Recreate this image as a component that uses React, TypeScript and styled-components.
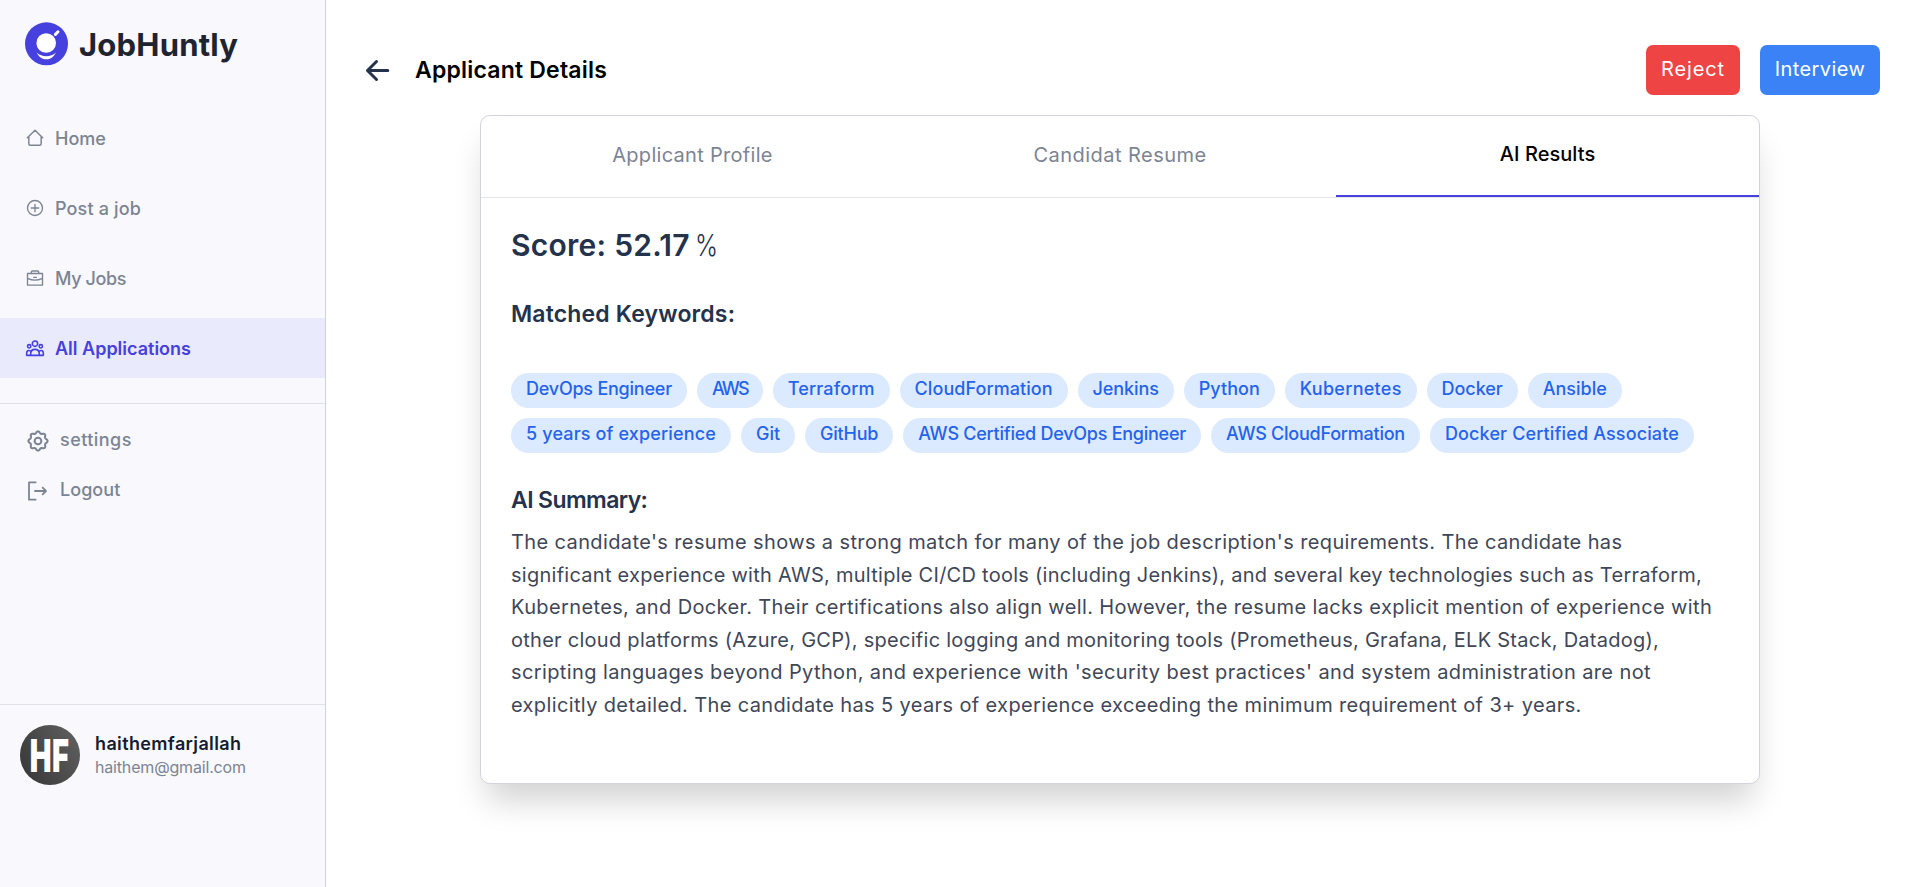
import React from 'react';
import styled, { createGlobalStyle, css } from 'styled-components';

const GlobalStyle = createGlobalStyle`
  *, *::before, *::after { box-sizing: border-box; }
  body {
    margin: 0;
    background: #fff;
    font-family: Inter, "Liberation Sans", sans-serif;
    color: #25324b;
  }
  h1, h2, h3, p { margin: 0; }
  button { font: inherit; border: 0; background: none; padding: 0; }
  svg { display: block; flex: none; }
`;

const Text = styled.span<{ $ls?: number }>`
  letter-spacing: ${(p) => p.$ls ?? 0}px;
  white-space: nowrap;
`;

const Page = styled.div`
  display: flex;
  height: 887px;
  overflow: hidden;
`;

const Sidebar = styled.aside`
  display: flex;
  flex-direction: column;
  flex: none;
  width: 326px;
  background: #f8f8fd;
  border-right: 1px solid #d0d2da;
`;

const Brand = styled.div`
  display: flex;
  align-items: center;
  gap: 10px;
  height: 88px;
  padding-left: 25px;
`;

const BrandName = styled(Text)`
  font-size: 31px;
  font-weight: 700;
  line-height: 36px;
  color: #202430;
  padding-top: 2px;
`;

const Nav = styled.nav`
  display: flex;
  flex-direction: column;
  gap: 10px;
  padding: 20px 0 25px;
`;

const NavItem = styled.a<{ $active?: boolean }>`
  display: flex;
  align-items: center;
  gap: 10px;
  height: 60px;
  padding-left: 25px;
  font-size: 18px;
  font-weight: 500;
  color: #7c8493;
  ${(p) =>
    p.$active &&
    css`
      background: #e9ebfd;
      color: #4640de;
      font-weight: 600;
    `}
`;

const Secondary = styled.div`
  display: flex;
  flex: none;
  flex-direction: column;
  height: 301px;
  padding-top: 12px;
  border-top: 1px solid #e0e1e8;
`;

const SecondaryItem = styled.a`
  display: flex;
  align-items: center;
  gap: 11px;
  height: 50px;
  padding: 0 0 3px 27px;
  font-size: 18px;
  font-weight: 500;
  color: #7c8493;
  & > svg { margin-top: 3px; }
`;

const Account = styled.div`
  display: flex;
  flex: 1;
  gap: 15px;
  padding: 20px;
  border-top: 1px solid #e0e1e8;
`;

const Avatar = styled.div`
  display: flex;
  align-items: center;
  justify-content: center;
  width: 60px;
  height: 60px;
  border-radius: 50%;
  background: linear-gradient(60deg, #353535, #626262);
  color: #fff;
  overflow: hidden;
`;

const Initials = styled.span`
  font-size: 46px;
  font-weight: 900;
  line-height: 60px;
  letter-spacing: 1px;
  transform: scaleX(0.63);
`;

const AccountInfo = styled.div`
  display: flex;
  flex-direction: column;
  padding-top: 7px;
  line-height: 23px;
`;

const AccountName = styled(Text)`
  font-size: 18px;
  font-weight: 600;
  color: #141c2e;
`;

const AccountMail = styled(Text)`
  font-size: 16px;
  line-height: 24px;
  color: #7c8493;
`;

const Main = styled.main`
  display: flex;
  flex: 1;
  flex-direction: column;
  padding: 45px 38px 0 34px;
`;

const Header = styled.header`
  display: flex;
  align-items: center;
  height: 50px;
`;

const BackButton = styled.button`
  margin: 1px 24px 0 5px;
`;

const Title = styled.h1`
  flex: 1;
  padding-bottom: 1px;
  font-size: 23px;
  font-weight: 600;
  color: #000;
`;

const Actions = styled.div`
  display: flex;
  gap: 20px;
`;

const ActionButton = styled.button<{ $tone: 'danger' | 'primary' }>`
  width: ${(p) => (p.$tone === 'danger' ? 94 : 120)}px;
  height: 50px;
  padding-bottom: 3px;
  border-radius: 7px;
  background: ${(p) => (p.$tone === 'danger' ? '#ef4444' : '#3b82f6')};
  color: #fff;
  font-size: 20px;
`;

const Card = styled.section`
  display: flex;
  flex-direction: column;
  align-self: center;
  width: 1280px;
  height: 669px;
  margin-top: 20px;
  border: 1px solid #d1d3dc;
  border-radius: 10px;
  background: #fff;
  box-shadow: 0 23px 33px -7px rgba(0, 0, 0, 0.18);
`;

const Tabs = styled.div`
  display: flex;
  flex: none;
  justify-content: space-between;
  height: 82px;
  border-bottom: 1px solid #e2e4e9;
`;

const Tab = styled.button<{ $active?: boolean }>`
  width: 423px;
  height: 81px;
  padding-bottom: 3px;
  font-size: 20px;
  color: #7c8493;
  ${(p) =>
    p.$active &&
    css`
      border-bottom: 2px solid #4640de;
      color: #000;
      font-weight: 500;
    `}
`;

const Results = styled.div`
  display: flex;
  flex-direction: column;
  padding: 30px 30px 0;
`;

const Score = styled.h2`
  display: flex;
  height: 34px;
  font-size: 30px;
  font-weight: 600;
  line-height: 34px;
`;

const Percent = styled.span`
  margin-left: 5px;
  font-weight: 300;
  transform: scaleX(0.82);
  transform-origin: left;
`;

const SectionTitle = styled.h3<{ $top: number }>`
  margin-top: ${(p) => p.$top}px;
  font-size: 23px;
  font-weight: 600;
  line-height: 28px;
`;

const Chips = styled.div`
  display: flex;
  flex-direction: column;
  gap: 10px;
  margin-top: 45px;
`;

const ChipRow = styled.div`
  display: flex;
  gap: 10px;
`;

const Chip = styled(Text)`
  height: 35px;
  padding: 0 15px;
  border-radius: 18px;
  background: #dbeafe;
  color: #2563eb;
  font-size: 18px;
  font-weight: 500;
  line-height: 32px;
`;

const Summary = styled.p`
  display: flex;
  flex-direction: column;
  margin-top: 12px;
  font-size: 20px;
  line-height: 32.5px;
  color: #3f4757;
`;

const LogoMark = () => (
  <svg width="44" height="44" viewBox="0 0 44 44">
    <circle cx="21.5" cy="21.8" r="21.5" fill="#4640de" />
    <circle cx="21.2" cy="21" r="9.8" fill="#fff" />
    <path d="M33 9.800 30.400 12.400" stroke="#fff" strokeWidth="3" strokeLinecap="round" />
    <path d="M11.6 30.4C16 39.6 26.6 39.6 31 30.4 25.5 35.4 17.1 35.4 11.6 30.4Z" fill="#fff" />
  </svg>
);

const LineIcon = ({ size = 20, weight = 4.4, children }: { size?: number; weight?: number; children: React.ReactNode }) => (
  <svg
    width={size}
    height={size}
    viewBox={`0 0 ${size * 3} ${size * 3}`}
    fill="none"
    stroke="currentColor"
    strokeWidth={weight}
    strokeLinecap="round"
    strokeLinejoin="round"
  >
    {children}
  </svg>
);

const HomeIcon = () => (
  <LineIcon>
    <path d="M7 29 30 7 53 29M11.500 26V47Q11.500 51.500 16 51.500H44Q48.500 51.500 48.500 47V26" />
  </LineIcon>
);

const AddIcon = () => (
  <LineIcon weight={4}>
    <circle cx="30" cy="30" r="22.500" />
    <path d="M30 19V41M19 30H41" />
  </LineIcon>
);

const BriefcaseIcon = () => (
  <LineIcon weight={4}>
    <path d="M7.500 16.500H52.500V51.500H7.500ZM19 16V12Q19 9 22 9H38Q41 9 41 12V16M8 31Q30 42 52 31M26 28H34" />
  </LineIcon>
);

const PeopleIcon = () => (
  <LineIcon weight={4.8}>
    <circle cx="30" cy="17" r="8" />
    <circle cx="12.500" cy="25" r="5" />
    <circle cx="47.500" cy="25" r="5" />
    <path d="M17 52V48C17 39 22 34 30 34S43 39 43 48V52M17 39Q5 34 5 46V52H55V46Q55 34 43 39" />
  </LineIcon>
);

const gearPath = Array.from({ length: 96 }, (_, i) => {
  const a = (i / 96) * Math.PI * 2;
  const r = 26 + 2.8 * Math.cos(8 * a);
  return `${i ? 'L' : 'M'}${(33 + r * Math.sin(a)).toFixed(2)} ${(33 - r * Math.cos(a)).toFixed(2)}`;
}).join('') + 'Z';

const GearIcon = () => (
  <LineIcon size={22} weight={6}>
    <path d={gearPath} />
    <circle cx="33" cy="33" r="10" />
  </LineIcon>
);

const LogoutIcon = () => (
  <LineIcon size={22} weight={5.4}>
    <path d="M26 7H6V59H26M24 33H57M47 23 57 33 47 43" />
  </LineIcon>
);

const BackIcon = () => (
  <svg width="26" height="24" viewBox="0 0 26 24" fill="none" stroke="#25324b" strokeWidth="3" strokeLinecap="round" strokeLinejoin="round">
    <path d="M2.500 11.500H22.800M11.500 2.500 2.500 11.500 11.500 20.500" />
  </svg>
);

const navItems = [
  { label: 'Home', ls: 0, icon: <HomeIcon /> },
  { label: 'Post a job', ls: 0.15, icon: <AddIcon /> },
  { label: 'My Jobs', ls: -0.37, icon: <BriefcaseIcon /> },
  { label: 'All Applications', ls: 0, icon: <PeopleIcon />, active: true },
];

const chipRows: [string, number][][] = [
  [
    ['DevOps Engineer', -0.227],
    ['AWS', -1.8],
    ['Terraform', 0.133],
    ['CloudFormation', 0.057],
    ['Jenkins', -0.1],
    ['Python', 0.03],
    ['Kubernetes', 0.27],
    ['Docker', -0.05],
    ['Ansible', 0],
  ],
  [
    ['5 years of experience', 0.147],
    ['Git', 0],
    ['GitHub', -0.23],
    ['AWS Certified DevOps Engineer', -0.25],
    ['AWS CloudFormation', -0.24],
    ['Docker Certified Associate', 0.14],
  ],
];

const summaryLines: [string, number][] = [
  ["The candidate's resume shows a strong match for many of the job description's requirements. The candidate has", 0.383],
  ['significant experience with AWS, multiple CI/CD tools (including Jenkins), and several key technologies such as Terraform,', 0.268],
  ['Kubernetes, and Docker. Their certifications also align well. However, the resume lacks explicit mention of experience with', 0.373],
  ['other cloud platforms (Azure, GCP), specific logging and monitoring tools (Prometheus, Grafana, ELK Stack, Datadog),', 0.27],
  ["scripting languages beyond Python, and experience with 'security best practices' and system administration are not", 0.389],
  ['explicitly detailed. The candidate has 5 years of experience exceeding the minimum requirement of 3+ years.', 0.37],
];

export default function App() {
  return (
    <Page>
      <GlobalStyle />
      <Sidebar>
        <Brand>
          <LogoMark />
          <BrandName $ls={0.2}>JobHuntly</BrandName>
        </Brand>
        <Nav>
          {navItems.map((item) => (
            <NavItem key={item.label} $active={item.active}>
              {item.icon}
              <Text $ls={item.ls}>{item.label}</Text>
            </NavItem>
          ))}
        </Nav>
        <Secondary>
          <SecondaryItem>
            <GearIcon />
            <Text $ls={0.45}>settings</Text>
          </SecondaryItem>
          <SecondaryItem>
            <LogoutIcon />
            <Text $ls={0.05}>Logout</Text>
          </SecondaryItem>
        </Secondary>
        <Account>
          <Avatar>
            <Initials>HF</Initials>
          </Avatar>
          <AccountInfo>
            <AccountName $ls={0.36}>haithemfarjallah</AccountName>
            <AccountMail $ls={-0.17}>haithem@gmail.com</AccountMail>
          </AccountInfo>
        </Account>
      </Sidebar>
      <Main>
        <Header>
          <BackButton aria-label="Back">
            <BackIcon />
          </BackButton>
          <Title>
            <Text $ls={0.2}>Applicant Details</Text>
          </Title>
          <Actions>
            <ActionButton $tone="danger">
              <Text $ls={0.85}>Reject</Text>
            </ActionButton>
            <ActionButton $tone="primary">
              <Text $ls={0.4}>Interview</Text>
            </ActionButton>
          </Actions>
        </Header>
        <Card>
          <Tabs>
            <Tab>
              <Text $ls={0.296}>Applicant Profile</Text>
            </Tab>
            <Tab>
              <Text $ls={0.462}>Candidat Resume</Text>
            </Tab>
            <Tab $active>
              <Text $ls={0.05}>AI Results</Text>
            </Tab>
          </Tabs>
          <Results>
            <Score>
              <Text $ls={0.254}>Score: 52.17</Text>
              <Percent>%</Percent>
            </Score>
            <SectionTitle $top={38}>
              <Text $ls={0.16}>Matched Keywords:</Text>
            </SectionTitle>
            <Chips>
              {chipRows.map((row, i) => (
                <ChipRow key={i}>
                  {row.map(([label, ls]) => (
                    <Chip key={label} $ls={ls}>
                      {label}
                    </Chip>
                  ))}
                </ChipRow>
              ))}
            </Chips>
            <SectionTitle $top={33}>
              <Text $ls={-0.6}>AI Summary:</Text>
            </SectionTitle>
            <Summary>
              {summaryLines.map(([line, ls]) => (
                <Text key={line} $ls={ls}>
                  {line}
                </Text>
              ))}
            </Summary>
          </Results>
        </Card>
      </Main>
    </Page>
  );
}
